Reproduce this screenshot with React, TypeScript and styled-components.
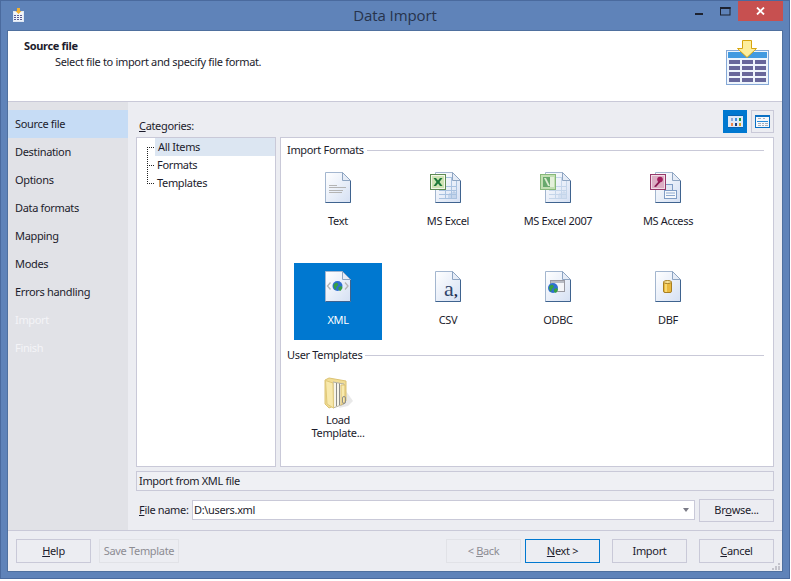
import React from 'react';
import styled, { createGlobalStyle } from 'styled-components';

const GlobalStyle = createGlobalStyle`
  html, body {
    margin: 0;
    padding: 0;
    background: #fff;
  }
  * {
    box-sizing: border-box;
  }
`;

const Window = styled.div`
  width: 790px;
  height: 579px;
  background: #5f83b9;
  border: 1px solid #4a6a9e;
  padding: 0 7px;
  font-family: 'Noto Sans', 'Liberation Sans', sans-serif;
  font-size: 11px;
  letter-spacing: -0.33px;
  color: #1c1c2c;
  overflow: hidden;
`;

const TitleBar = styled.div`
  height: 30px;
  display: grid;
  grid-template-columns: 1fr auto 1fr;
  align-items: start;
`;

const AppIcon = styled.div`
  display: flex;
  padding: 7px 0 0 5px;
`;

const Title = styled.div`
  font-family: 'Open Sans', 'Noto Sans', sans-serif;
  font-size: 15px;
  letter-spacing: -0.1px;
  line-height: 29px;
  color: #27334c;
`;

const Controls = styled.div`
  display: flex;
  justify-content: flex-end;
  margin-right: -1px;
`;

const ControlButton = styled.div<{ $close?: boolean }>`
  width: ${({ $close }) => ($close ? '45px' : '26px')};
  height: 20px;
  background: ${({ $close }) => ($close ? '#c75050' : 'transparent')};
  display: flex;
  align-items: center;
  justify-content: center;
`;

const Content = styled.div`
  height: 540px;
  background: #ecedf2;
  box-shadow: 0 0 0 1px #4f709f;
  display: flex;
  flex-direction: column;
`;

const Header = styled.div`
  height: 71px;
  flex: none;
  background: #fff;
  border-bottom: 1px solid #c9c9d8;
  display: flex;
  justify-content: space-between;
  padding: 9px 12px 0 16px;
`;

const HeaderCopy = styled.div`
  margin-top: -1px;
`;

const HeaderTitle = styled.div`
  font-weight: 700;
  line-height: 13px;
  margin-bottom: 3px;
`;

const HeaderText = styled.div`
  padding-left: 31px;
  line-height: 13px;
`;

const Middle = styled.div`
  flex: 1;
  display: flex;
  min-height: 0;
`;

const Sidebar = styled.div`
  width: 120px;
  flex: none;
  background: #e1e2e7;
  padding-top: 8px;
`;

const Step = styled.div<{ $active?: boolean; $disabled?: boolean }>`
  height: 28px;
  padding-left: 7px;
  line-height: 28px;
  background: ${({ $active }) => ($active ? '#c6dcf5' : 'transparent')};
  color: ${({ $disabled }) => ($disabled ? '#f4f4f7' : 'inherit')};
`;

const Main = styled.div`
  flex: 1;
  min-width: 0;
  padding: 8px;
  display: flex;
  flex-direction: column;
`;

const TopRow = styled.div`
  height: 23px;
  display: flex;
  align-items: flex-end;
  justify-content: space-between;
  margin-bottom: 4px;
`;

const CategoriesLabel = styled.label`
  padding-left: 3px;
  line-height: 15px;
`;

const ViewButtons = styled.div`
  display: flex;
  gap: 4px;
`;

const ViewButton = styled.div<{ $active?: boolean }>`
  width: ${({ $active }) => ($active ? '24px' : '23px')};
  height: 23px;
  background: ${({ $active }) => ($active ? '#0078d0' : 'transparent')};
  border: 1px solid ${({ $active }) => ($active ? '#0078d0' : '#c9c9d8')};
  display: flex;
  align-items: center;
  justify-content: center;
`;

const Panes = styled.div`
  height: 330px;
  display: flex;
  gap: 4px;
`;

const Pane = styled.div`
  background: #fff;
  border: 1px solid #c9c9d8;
`;

const TreePane = styled(Pane)`
  width: 140px;
  flex: none;
  display: flex;
  padding-left: 10px;
`;

const TreeLines = styled.svg`
  flex: none;
  margin-top: 9px;
`;

const TreeList = styled.div`
  flex: 1;
`;

const TreeRow = styled.div<{ $selected?: boolean }>`
  height: 18px;
  line-height: 18px;
  padding-left: ${({ $selected }) => ($selected ? '3px' : '2px')};
  background: ${({ $selected }) => ($selected ? '#dce6f2' : 'transparent')};
`;

const FormatsPane = styled(Pane)`
  flex: 1;
  min-width: 0;
  padding: 3px 9px 0 6px;
`;

const GroupHeader = styled.div`
  height: 18px;
  display: flex;
  align-items: center;
  gap: 3px;
  line-height: 18px;
  margin-bottom: 5px;

  &::after {
    content: '';
    flex: 1;
    height: 1px;
    background: #c9c9d8;
  }
`;

const TileGrid = styled.div`
  display: grid;
  grid-template-columns: repeat(4, 88px);
  column-gap: 22px;
  row-gap: 22px;
  padding-left: 7px;
  margin-bottom: 6px;
`;

const Tile = styled.div<{ $selected?: boolean }>`
  height: 77px;
  padding-top: 8px;
  display: flex;
  flex-direction: column;
  align-items: center;
  background: ${({ $selected }) => ($selected ? '#0078d0' : 'transparent')};
  color: ${({ $selected }) => ($selected ? '#fff' : 'inherit')};
`;

const TileIcon = styled.svg`
  display: block;
  flex: none;
`;

const TileLabel = styled.div<{ $tight?: boolean }>`
  margin-top: ${({ $tight }) => ($tight ? '4px' : '11px')};
  line-height: 13px;
  text-align: center;
  white-space: pre-line;
`;

const StatusBar = styled.div`
  height: 20px;
  margin-top: 4px;
  flex: none;
  background: #eff0f4;
  border: 1px solid #c9c9d8;
  padding-left: 2px;
  line-height: 18px;
`;

const FileRow = styled.div`
  display: flex;
  align-items: flex-start;
  margin-top: 8px;
  height: 23px;
`;

const FileLabel = styled.label`
  width: 56px;
  flex: none;
  padding-left: 3px;
  line-height: 21px;
`;

const Combo = styled.div`
  flex: 1;
  min-width: 0;
  height: 20px;
  margin-top: 1px;
  background: #fff;
  border: 1px solid #c9c9d8;
  padding-left: 1px;
  line-height: 18px;
  display: flex;
  align-items: center;
  justify-content: space-between;
  margin-right: 4px;
`;

const ComboArrow = styled.span`
  width: 0;
  height: 0;
  border-left: 3.5px solid transparent;
  border-right: 3.5px solid transparent;
  border-top: 4px solid #7a7a86;
  margin-right: 5px;
`;

const Button = styled.div<{ $width?: number; $height?: number; $disabled?: boolean; $focused?: boolean }>`
  width: ${({ $width }) => $width ?? 75}px;
  height: ${({ $height }) => $height ?? 24}px;
  flex: none;
  display: flex;
  align-items: center;
  justify-content: center;
  padding-bottom: 2px;
  background: #ecedf2;
  border: 1px solid ${({ $disabled, $focused }) => ($focused ? '#0078d0' : $disabled ? '#e1e2e7' : '#c9c9d8')};
  color: ${({ $disabled }) => ($disabled ? '#8c8c92' : 'inherit')};
`;

const Footer = styled.div`
  position: relative;
  height: 41px;
  flex: none;
  border-top: 1px solid #c9c9d8;
  padding: 8px 8px 0;
  display: flex;
`;

const FooterGroup = styled.div`
  display: flex;
  gap: 8px;
`;

const NavGroup = styled.div`
  display: flex;
  gap: 4px;
  margin-left: auto;
`;

const ActionGap = styled.div`
  width: 4px;
`;

const Grip = styled.svg`
  position: absolute;
  right: 1px;
  bottom: 1px;
`;

const U = styled.span`
  text-decoration: underline;
`;

const DocBase: React.FC<{ left?: number; children?: React.ReactNode; id: string }> = ({ left = 0, children, id }) => (
  <TileIcon width={26 + left * 2} height={31} viewBox={`${-left} 0 ${26 + left * 2} 31`}>
    <defs>
      <linearGradient id={id} x1="0" y1="0" x2="1" y2="1">
        <stop offset="0" stopColor="#ffffff" />
        <stop offset="1" stopColor="#d5e0f3" />
      </linearGradient>
    </defs>
    <path d="M0.5 .5H17.5L25.5 8.5V30.5H.5Z" fill={`url(#${id})`} stroke="#a3b6cf" />
    <path d="M25.5 8.5V30.5H.5" fill="none" stroke="#3f638f" />
    <path d="M17.5 .5V8.5H25.5Z" fill="#e6ecf6" stroke="#8ea5c2" />
    {children}
  </TileIcon>
);

const TextLines = () => (
  <g fill="#b4b4b4">
    <rect x="4" y="13" width="8" height="1" />
    <rect x="4" y="15" width="17" height="1" />
    <rect x="4" y="18" width="14" height="1" />
    <rect x="4" y="20" width="13" height="1" />
  </g>
);

const SheetGrid: React.FC<{ color: string }> = ({ color }) => (
  <g stroke={color} fill="none">
    <path d="M10 5.5H17M4 14.5H22M4 18.5H22M4 22.5H22M4 26.5H22M10.5 5V27M16.5 5V27M21.5 9V27" />
    <path d="M14 26V22H16V26M18 26V20H20V26" />
  </g>
);

const ExcelIcon = () => (
  <DocBase id="excel" left={5}>
    <SheetGrid color="#a9c2e0" />
    <rect x="-4.5" y="2.5" width="15" height="15" fill="#f4f7ea" stroke="#5d8a52" strokeWidth="1" />
    <rect x="-3" y="4" width="12" height="12" fill="#cfe3b4" />
    <path d="M-1.5 6H1L3 8.5 5 6H7.5L4.5 10 7.5 14H5L3 11.5 1 14H-1.5L1.5 10Z" fill="#1f7a3a" />
  </DocBase>
);

const Excel2007Icon = () => (
  <DocBase id="excel07" left={5}>
    <SheetGrid color="#c4d5ea" />
    <rect x="-4.5" y="2.5" width="15" height="15" fill="#c2dfb2" stroke="#86b878" />
    <rect x="-2" y="5" width="7" height="10" fill="#68a86c" />
    <path d="M-1 6H1L5 14H3Z" fill="#dcebd0" />
    <rect x="5" y="5" width="4" height="10" fill="#e4f0da" />
  </DocBase>
);

const AccessIcon = () => (
  <DocBase id="access" left={5}>
    <rect x="9.5" y="12.5" width="8" height="7" fill="#dfe8f5" stroke="#7f9cc5" />
    <rect x="9.5" y="18.5" width="12" height="8" fill="#f5f8fc" stroke="#7f9cc5" />
    <path d="M11 21H20M11 23.5H20" stroke="#8ea9cf" />
    <rect x="-4.5" y="2.5" width="15" height="15" fill="#f1dde6" stroke="#96386a" />
    <rect x="-3" y="4" width="12" height="12" fill="#dcaec4" />
    <circle cx="5" cy="7.5" r="2.8" fill="#a11e5d" />
    <path d="M4 9L-1 14.5 1 15 5.5 10Z" fill="#8b1a52" />
  </DocBase>
);

const GlobeMark: React.FC<{ cx: number; cy: number; r: number }> = ({ cx, cy, r }) => (
  <g>
    <circle cx={cx} cy={cy} r={r} fill="#2f6fd0" />
    <path d={`M${cx - r + 1} ${cy - 1}q2 -3 4 -2l1 2 -2 2 -1 3q-2 -2 -2 -5Z`} fill="#35a043" />
    <path d={`M${cx + 1} ${cy + 1}l3 -1 1 2 -2 3 -2 -1Z`} fill="#35a043" />
  </g>
);

const XmlIcon = () => (
  <DocBase id="xml">
    <path d="M5.5 11.5L2.5 15 5.5 18.5M20 11.5L23 15 20 18.5" fill="none" stroke="#b4b4b4" strokeWidth="1.3" />
    <GlobeMark cx={12.5} cy={15} r={5} />
  </DocBase>
);

const CsvIcon = () => (
  <DocBase id="csv">
    <text x="9" y="25" fontFamily="'Liberation Serif', serif" fontSize="22" fill="#2e4369">a</text>
    <text x="19" y="25" fontFamily="'Liberation Serif', serif" fontSize="15" fontWeight="700" fill="#1d2c4a">,</text>
  </DocBase>
);

const OdbcIcon = () => (
  <DocBase id="odbc">
    <rect x="5.5" y="9.5" width="14" height="11" fill="#f4f5f8" stroke="#9a9aa2" />
    <rect x="6" y="10" width="13" height="2" fill="#b9bcc4" />
    <GlobeMark cx={8} cy={17} r={5} />
  </DocBase>
);

const DbfIcon = () => (
  <DocBase id="dbf">
    <rect x="8.5" y="10.5" width="8" height="11" rx="1.5" fill="#eab93e" stroke="#a87f22" />
    <ellipse cx="12.5" cy="11" rx="4" ry="1.5" fill="#f9e49a" stroke="#a87f22" />
    <rect x="10" y="13" width="2" height="8" fill="#f7d873" />
  </DocBase>
);

const FolderIcon = () => (
  <TileIcon width={29} height={32} viewBox="0 0 29 32">
    <path d="M22 14L29 24 24 29 15 31Z" fill="#9a9a9a" opacity=".22" />
    <path d="M1 3L5 1 22 4V24L5 31 1 27Z" fill="#f1dd95" stroke="#dcc374" />
    <path d="M9 5L20 7V27L9 31Z" fill="#f7f5ea" stroke="#b5b2a2" />
    <path d="M12.5 6V29M15.5 6.5V28" stroke="#8d8d88" />
    <path d="M1.5 3.5L9 6 9.5 31 3 27Z" fill="#f8e9ac" stroke="#e0c878" />
    <path d="M17 8L21 8V25L17 28Z" fill="#f8eaae" stroke="#dcc070" />
    <path d="M18.5 21a1.5 1.5 0 0 1 3 0v4a1.5 1.5 0 0 1 -3 0Z" fill="none" stroke="#8e8e8a" />
  </TileIcon>
);

const ImportTableIcon = () => (
  <svg width="44" height="46" viewBox="0 0 44 46">
    <rect x=".5" y="10.5" width="42" height="34" fill="#eef5fc" stroke="#85a8d6" />
    <rect x="2" y="12" width="39" height="6" fill="#429ae0" />
    {[20, 26, 32, 38].map(y =>
      [3, 16, 29].map(x => <rect key={`${x}-${y}`} x={x} y={y} width="11" height="4" fill="#67679b" />)
    )}
    <path d="M16.5 .5H25.5V8.5H30.5L21 17.5 11.5 8.5H16.5Z" fill="#fdee9c" stroke="#d7a50e" />
  </svg>
);

const SmallAppIcon = () => (
  <svg width="12" height="15" viewBox="0 0 12 15">
    <rect x=".5" y="3.5" width="10" height="10" fill="#eef3fb" stroke="#dfe7f3" />
    <rect x="1" y="4" width="9" height="2" fill="#f5f5f5" />
    <g fill="#5d5d90">
      {[7, 9, 11].map(y => [1, 4, 7].map(x => <rect key={`${x}-${y}`} x={x} y={y} width="2" height="1" />))}
    </g>
    <path d="M4 0H7V3H8.5L5.5 6 2.5 3H4Z" fill="#f2b233" />
  </svg>
);

const TilesViewIcon = () => (
  <svg width="15" height="13" viewBox="0 0 15 13">
    <rect width="15" height="13" fill="#dfe9f6" />
    <rect x="0" y="0" width="15" height="1" fill="#0a62b0" />
    <rect x="0" y="12" width="15" height="1" fill="#0a62b0" />
    <rect x="3" y="3" width="2" height="3" fill="#8fa8d8" />
    <rect x="7" y="3" width="2" height="3" fill="#3d8fe0" />
    <rect x="11" y="3" width="2" height="3" fill="#1f9c3c" />
    <rect x="3" y="8" width="2" height="3" fill="#f0864a" />
    <rect x="7" y="8" width="2" height="3" fill="#1d3f80" />
    <rect x="11" y="8" width="2" height="3" fill="#d9a520" />
  </svg>
);

const DetailsViewIcon = () => (
  <svg width="15" height="13" viewBox="0 0 15 13">
    <rect x=".5" y=".5" width="14" height="12" fill="#f5f8fc" stroke="#0a70c4" />
    <rect x="0" y="0" width="15" height="2" fill="#0a70c4" />
    <rect x="2" y="6" width="11" height="1" fill="#2a8ad8" />
    <path d="M3 3.5H6M8 3.5H10M3 8.5H6M7 8.5H9M10 8.5H13M3 10.5H6M7 10.5H9M10 10.5H13" stroke="#a8aeb8" />
  </svg>
);

const steps = ['Source file', 'Destination', 'Options', 'Data formats', 'Mapping', 'Modes', 'Errors handling', 'Import', 'Finish'];

const App: React.FC = () => (
  <Window>
    <GlobalStyle />
    <TitleBar>
      <AppIcon>
        <SmallAppIcon />
      </AppIcon>
      <Title>Data Import</Title>
      <Controls>
        <ControlButton>
          <svg width="9" height="10" viewBox="0 0 9 10">
            <rect width="8" height="2" y="7" fill="#1d2230" />
          </svg>
        </ControlButton>
        <ControlButton>
          <svg width="11" height="9" viewBox="0 0 11 9">
            <rect x=".5" y=".5" width="9.5" height="7.5" fill="none" stroke="#1d2230" />
            <rect x="0" y="0" width="10.5" height="2" fill="#1d2230" />
          </svg>
        </ControlButton>
        <ControlButton $close>
          <svg width="9" height="8" viewBox="0 0 9 8">
            <path d="M1 .5L8 7.5M8 .5L1 7.5" stroke="#fff" strokeWidth="1.8" />
          </svg>
        </ControlButton>
      </Controls>
    </TitleBar>
    <Content>
      <Header>
        <HeaderCopy>
          <HeaderTitle>Source file</HeaderTitle>
          <HeaderText>Select file to import and specify file format.</HeaderText>
        </HeaderCopy>
        <ImportTableIcon />
      </Header>
      <Middle>
        <Sidebar>
          {steps.map((step, i) => (
            <Step key={step} $active={i === 0} $disabled={i > 6}>
              {step}
            </Step>
          ))}
        </Sidebar>
        <Main>
          <TopRow>
            <CategoriesLabel>
              <U>C</U>ategories:
            </CategoriesLabel>
            <ViewButtons>
              <ViewButton $active>
                <TilesViewIcon />
              </ViewButton>
              <ViewButton>
                <DetailsViewIcon />
              </ViewButton>
            </ViewButtons>
          </TopRow>
          <Panes>
            <TreePane>
              <TreeLines width="8" height="38" viewBox="0 0 8 38">
                <path d="M.5 0V37M0 .5H8M0 18.5H8M0 36.5H8" stroke="#222" strokeDasharray="1 1" fill="none" />
              </TreeLines>
              <TreeList>
                <TreeRow $selected>All Items</TreeRow>
                <TreeRow>Formats</TreeRow>
                <TreeRow>Templates</TreeRow>
              </TreeList>
            </TreePane>
            <FormatsPane>
              <GroupHeader>Import Formats</GroupHeader>
              <TileGrid>
                <Tile>
                  <DocBase id="text">
                    <TextLines />
                  </DocBase>
                  <TileLabel>Text</TileLabel>
                </Tile>
                <Tile>
                  <ExcelIcon />
                  <TileLabel>MS Excel</TileLabel>
                </Tile>
                <Tile>
                  <Excel2007Icon />
                  <TileLabel>MS Excel 2007</TileLabel>
                </Tile>
                <Tile>
                  <AccessIcon />
                  <TileLabel>MS Access</TileLabel>
                </Tile>
                <Tile $selected>
                  <XmlIcon />
                  <TileLabel>XML</TileLabel>
                </Tile>
                <Tile>
                  <CsvIcon />
                  <TileLabel>CSV</TileLabel>
                </Tile>
                <Tile>
                  <OdbcIcon />
                  <TileLabel>ODBC</TileLabel>
                </Tile>
                <Tile>
                  <DbfIcon />
                  <TileLabel>DBF</TileLabel>
                </Tile>
              </TileGrid>
              <GroupHeader>User Templates</GroupHeader>
              <TileGrid>
                <Tile>
                  <FolderIcon />
                  <TileLabel $tight>{'Load\nTemplate...'}</TileLabel>
                </Tile>
              </TileGrid>
            </FormatsPane>
          </Panes>
          <StatusBar>Import from XML file</StatusBar>
          <FileRow>
            <FileLabel>
              <U>F</U>ile name:
            </FileLabel>
            <Combo>
              D:\users.xml
              <ComboArrow />
            </Combo>
            <Button $height={23}>
              Br<U>o</U>wse...
            </Button>
          </FileRow>
        </Main>
      </Middle>
      <Footer>
        <FooterGroup>
          <Button>
            <U>H</U>elp
          </Button>
          <Button $width={80} $disabled>
            Save Template
          </Button>
        </FooterGroup>
        <NavGroup>
          <Button $disabled>
            &lt;&nbsp;<U>B</U>ack
          </Button>
          <Button $focused>
            <U>N</U>ext &gt;
          </Button>
          <ActionGap />
          <Button>Import</Button>
          <ActionGap />
          <Button>
            <U>C</U>ancel
          </Button>
        </NavGroup>
        <Grip width="9" height="7" viewBox="0 0 9 7">
          <path d="M6 0h2v2H6zM3 3h2v2H3zM6 3h2v2H6zM0 5h2v2H0zM3 5h2v2H3zM6 5h2v2H6z" fill="#c4c4cc" />
        </Grip>
      </Footer>
    </Content>
  </Window>
);

export default App;
